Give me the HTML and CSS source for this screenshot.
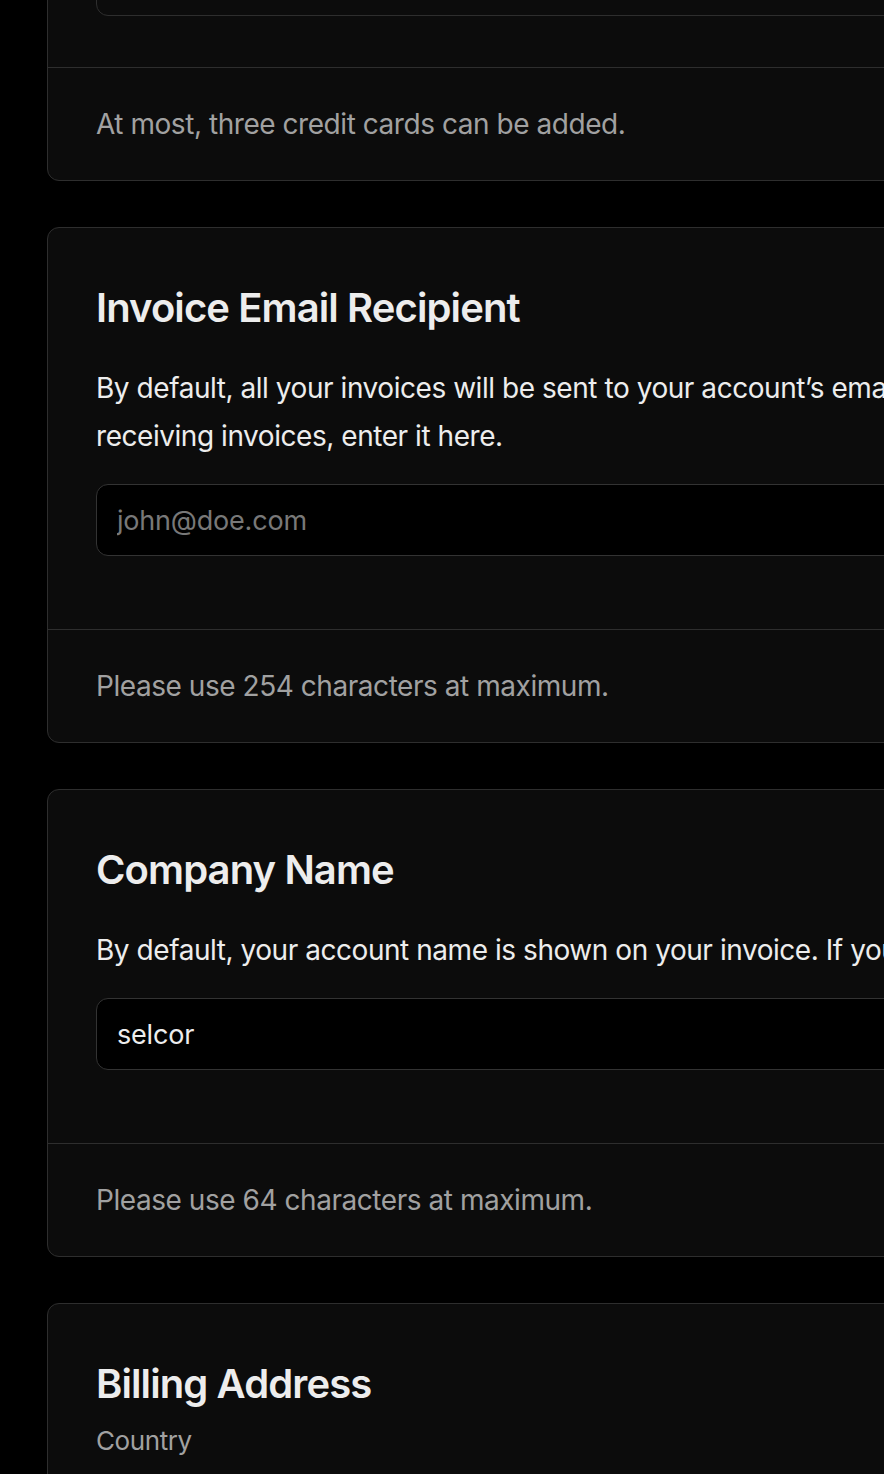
FILE: index.html
```html
<!DOCTYPE html>
<html lang="en">
<head>
    <meta charset="UTF-8">
    <meta name="viewport" content="width=device-width, initial-scale=1.0">
    <title>Billing Settings</title>
    <link rel="stylesheet" href="styles.css">
</head>
<body>
    <main class="settings">
        <section class="card">
            <div class="card-body">
                <h2 class="card-title">Payment Method</h2>
                <p class="card-text">Payments for domains, add-ons, and other usage are made using the default credit card.</p>
                <div class="card-list">
                    <div class="card-item">Visa ending in 4242</div>
                </div>
            </div>
            <div class="card-footer">At most, three credit cards can be added.</div>
        </section>

        <section class="card">
            <div class="card-body">
                <h2 class="card-title">Invoice Email Recipient</h2>
                <p class="card-text">By default, all your invoices will be sent to your account’s email address. If you want to use a custom email address specifically for receiving invoices, enter it here.</p>
                <div class="field">
                    <input class="text-input" type="email" placeholder="john@doe.com">
                </div>
            </div>
            <div class="card-footer">Please use 254 characters at maximum.</div>
        </section>

        <section class="card">
            <div class="card-body">
                <h2 class="card-title">Company Name</h2>
                <p class="card-text">By default, your account name is shown on your invoice. If you want to display a company name instead, enter it here.</p>
                <div class="field">
                    <input class="text-input" type="text" value="selcor">
                </div>
            </div>
            <div class="card-footer">Please use 64 characters at maximum.</div>
        </section>

        <section class="card">
            <div class="card-body">
                <h2 class="card-title">Billing Address</h2>
                <label class="field-label">Country</label>
                <div class="field">
                    <input class="text-input" type="text" value="United States">
                </div>
            </div>
        </section>
    </main>
</body>
</html>
```

FILE: styles.css
```css
html {
    overflow: hidden;
}

body {
    margin: 0;
    background-color: #000;
    color: #ededed;
    font-family: Inter, "Noto Sans", sans-serif;
}

.settings {
    display: flex;
    flex-direction: column;
    gap: 46px;
    width: 1768px;
    /* page is scrolled: the first card starts above the window */
    margin-top: -313px;
    padding-left: 47px;
}

.card {
    background-color: #0c0c0c;
    border: 1px solid #2e2e2e;
    border-radius: 12px;
}

.card-body {
    display: flex;
    flex-direction: column;
    padding: 48px;
}

.card-title {
    margin: 0 0 24px;
    font-size: 40px;
    line-height: 64px;
    font-weight: 600;
    letter-spacing: -0.9px;
}

.card-text {
    margin: 0 0 24px;
    font-size: 28px;
    line-height: 48px;
    letter-spacing: -0.45px;
}

.card-list {
    margin-bottom: 3px;
}

.card-item {
    height: 120px;
    border: 1px solid #2e2e2e;
    border-radius: 12px;
    box-sizing: border-box;
}

.field {
    margin-bottom: 25px;
}

.field-label {
    margin: -15px 0 20px;
    font-size: 26px;
    line-height: 32px;
    letter-spacing: -0.4px;
    color: #a1a1a1;
}

.text-input {
    display: block;
    width: 100%;
    height: 72px;
    box-sizing: border-box;
    padding: 0 20px;
    background-color: #000;
    border: 1px solid #333;
    border-radius: 12px;
    color: #ededed;
    font-family: inherit;
    font-size: 27px;
    letter-spacing: -0.2px;
    outline: none;
}

.text-input::placeholder {
    color: #787878;
}

.card-footer {
    display: flex;
    align-items: center;
    height: 112px;
    padding: 0 48px;
    border-top: 1px solid #2e2e2e;
    font-size: 28px;
    letter-spacing: -0.45px;
    color: #a1a1a1;
}
```
